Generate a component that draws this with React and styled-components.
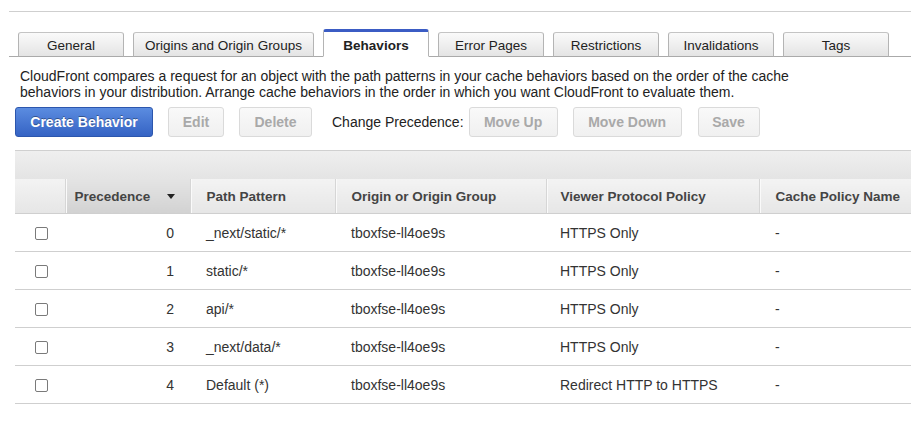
import React, { useState } from 'react'
import styled, { createGlobalStyle } from 'styled-components'

const GlobalStyle = createGlobalStyle`
  body {
    margin: 0;
    background: #fff;
    font-family: 'Liberation Sans', Arial, sans-serif;
    font-size: 14px;
    color: #222;
    overflow: hidden;
  }
`

const Page = styled.div`
  margin-top: 11px;
  margin-left: 9px;
  border-top: 1px solid #cfcfcf;
  width: 902px;
  overflow: hidden;
`

const TabBar = styled.div`
  display: flex;
  align-items: flex-end;
  gap: 9px;
  padding: 17px 0 0 9px;
  border-bottom: 1px solid #aaa;
`

const Tab = styled.div`
  box-sizing: border-box;
  width: ${p => (p.$wide ? '181px' : '106px')};
  height: ${p => (p.$active ? '28px' : '25px')};
  margin-bottom: -1px;
  display: flex;
  align-items: center;
  justify-content: center;
  padding-top: ${p => (p.$active ? '3px' : '1px')};
  border: 1px solid #b4b4b4;
  border-top: ${p => (p.$active ? '3px solid #3b5cc4' : '1px solid #c4c4c4')};
  border-bottom: ${p => (p.$active ? '1px solid #fff' : '1px solid #aaa')};
  border-radius: 3px 3px 0 0;
  background: ${p =>
    p.$active ? '#fff' : 'linear-gradient(#fafafa, #e4e4e4)'};
  font-size: 13.5px;
  font-weight: ${p => (p.$active ? 'bold' : 'normal')};
  color: #222;
  cursor: pointer;
`

const Description = styled.p`
  margin: 11px 0 0 11px;
  line-height: 16px;
  color: #222;
  width: 800px;
`

const Toolbar = styled.div`
  display: flex;
  align-items: center;
  margin: 7px 0 0 6px;
`

const Button = styled.button`
  box-sizing: border-box;
  height: 30px;
  width: ${p => p.$w}px;
  margin-left: ${p => p.$gap || 0}px;
  padding: 0;
  border-radius: 3px;
  font-family: inherit;
  font-size: 14px;
  font-weight: bold;
  cursor: ${p => (p.$primary ? 'pointer' : 'default')};
  color: ${p => (p.$primary ? '#fff' : '#a9a9a9')};
  text-shadow: ${p => (p.$primary ? '0 -1px 0 rgba(0,0,0,0.35)' : 'none')};
  border: 1px solid ${p => (p.$primary ? '#2c56ad' : '#dadada')};
  background: ${p =>
    p.$primary
      ? 'linear-gradient(#5b8ce0, #3563c4)'
      : 'linear-gradient(#f9f9f9, #f0f0f0)'};
`

const Label = styled.span`
  margin: 0 5px 0 20px;
  color: #222;
`

const TableWrap = styled.div`
  margin: 13px 0 0 6px;
  width: 1000px;
`

const TopBar = styled.div`
  height: 28px;
  border-top: 1px solid #d0d0d0;
  background: linear-gradient(#efefef, #e4e4e4);
`

const Table = styled.table`
  border-collapse: collapse;
  table-layout: fixed;
  width: 1000px;
`

const Th = styled.th`
  height: 34px;
  padding: 0 0 0 ${p => p.$pad ?? 16}px;
  text-align: left;
  font-size: 13.5px;
  font-weight: bold;
  color: #444;
  border-bottom: 1px solid #cfcfcf;
  border-left: ${p => (p.$first ? 'none' : '1px solid #d6d6d6')};
  box-shadow: ${p => (p.$first ? 'none' : 'inset 1px 0 0 #fafafa')};
  background: ${p =>
    p.$sorted
      ? 'linear-gradient(#e4e4e4, #d2d2d2)'
      : 'linear-gradient(#f3f3f3, #e6e6e6)'};
  white-space: nowrap;
`

const SortHead = styled.div`
  display: flex;
  align-items: center;
  justify-content: space-between;
  padding-right: 15px;
`

const Caret = styled.span`
  width: 0;
  height: 0;
  border-left: 4px solid transparent;
  border-right: 4px solid transparent;
  border-top: 5px solid #222;
`

const Td = styled.td`
  height: 37px;
  padding: 0 ${p => (p.$right ? '16px' : '0')} 0 ${p => p.$pad ?? 16}px;
  text-align: ${p => (p.$right ? 'right' : 'left')};
  color: #333;
  border-bottom: 1px solid #cfcfcf;
  white-space: nowrap;
`

const Check = styled.input.attrs({ type: 'checkbox' })`
  appearance: none;
  display: block;
  box-sizing: border-box;
  width: 13px;
  height: 13px;
  margin: 1px 0 0 20px;
  border: 1px solid #7a7a7a;
  border-radius: 2px;
  background: #fff;
  &:checked {
    background: #3b6bd0;
    border-color: #2c56ad;
  }
`

const tabs = [
  { name: 'General' },
  { name: 'Origins and Origin Groups', wide: true },
  { name: 'Behaviors' },
  { name: 'Error Pages' },
  { name: 'Restrictions' },
  { name: 'Invalidations' },
  { name: 'Tags' },
]

const behaviors = [
  { order: 0, path: '_next/static/*', origin: 'tboxfse-ll4oe9s', viewer: 'HTTPS Only' },
  { order: 1, path: 'static/*', origin: 'tboxfse-ll4oe9s', viewer: 'HTTPS Only' },
  { order: 2, path: 'api/*', origin: 'tboxfse-ll4oe9s', viewer: 'HTTPS Only' },
  { order: 3, path: '_next/data/*', origin: 'tboxfse-ll4oe9s', viewer: 'HTTPS Only' },
  { order: 4, path: 'Default (*)', origin: 'tboxfse-ll4oe9s', viewer: 'Redirect HTTP to HTTPS' },
]

export default function App() {
  const [active, setActive] = useState('Behaviors')
  const [selected, setSelected] = useState({})

  return (
    <>
      <GlobalStyle />
      <Page>
        <TabBar>
          {tabs.map(t => (
            <Tab
              key={t.name}
              $wide={t.wide}
              $active={active === t.name}
              onClick={() => setActive(t.name)}
            >
              {t.name}
            </Tab>
          ))}
        </TabBar>

        <Description>
          CloudFront compares a request for an object with the path patterns in your cache
          behaviors based on the order of the cache behaviors in your distribution. Arrange
          cache behaviors in the order in which you want CloudFront to evaluate them.
        </Description>

        <Toolbar>
          <Button $primary $w={138}>Create Behavior</Button>
          <Button $w={56} $gap={15} disabled>Edit</Button>
          <Button $w={73} $gap={15} disabled>Delete</Button>
          <Label>Change Precedence:</Label>
          <Button $w={89} disabled>Move Up</Button>
          <Button $w={109} $gap={15} disabled>Move Down</Button>
          <Button $w={62} $gap={16} disabled>Save</Button>
        </Toolbar>

        <TableWrap>
          <TopBar />
          <Table>
            <colgroup>
              <col style={{ width: 50 }} />
              <col style={{ width: 125 }} />
              <col style={{ width: 145 }} />
              <col style={{ width: 211 }} />
              <col style={{ width: 213 }} />
              <col />
            </colgroup>
            <thead>
              <tr>
                <Th $first />
                <Th $sorted $pad={9}>
                  <SortHead>
                    Precedence
                    <Caret />
                  </SortHead>
                </Th>
                <Th>Path Pattern</Th>
                <Th>Origin or Origin Group</Th>
                <Th $pad={14}>Viewer Protocol Policy</Th>
                <Th>Cache Policy Name</Th>
              </tr>
            </thead>
            <tbody>
              {behaviors.map(b => (
                <tr key={b.order}>
                  <Td $pad={0}>
                    <Check
                      checked={!!selected[b.order]}
                      onChange={e => setSelected({ ...selected, [b.order]: e.target.checked })}
                    />
                  </Td>
                  <Td $right $pad={0}>{b.order}</Td>
                  <Td>{b.path}</Td>
                  <Td>{b.origin}</Td>
                  <Td $pad={14}>{b.viewer}</Td>
                  <Td>-</Td>
                </tr>
              ))}
            </tbody>
          </Table>
        </TableWrap>
      </Page>
    </>
  )
}
